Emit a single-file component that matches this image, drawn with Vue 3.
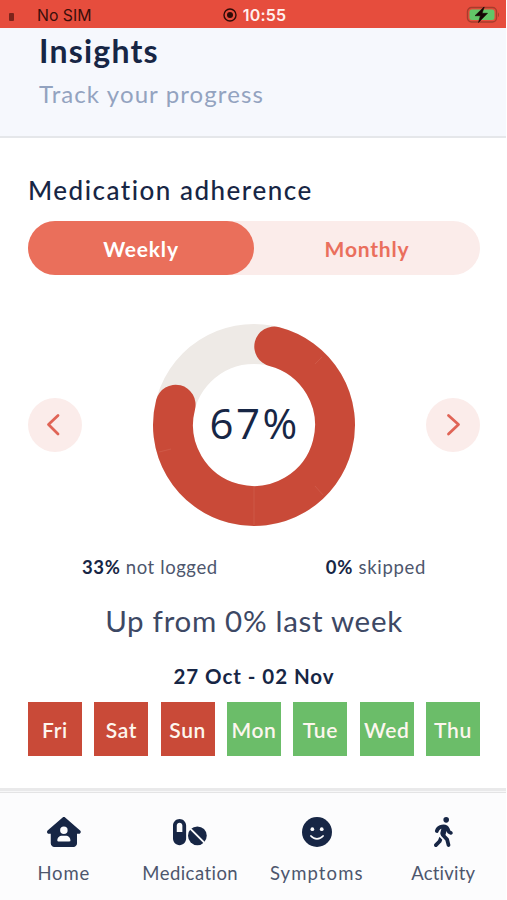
<template>
  <div class="screen">
    <div class="statusBar">
      <div class="carrier">
        <span class="signal"></span>
        <span class="sim">No SIM</span>
      </div>
      <div class="clock">
        <svg width="14" height="14" viewBox="0 0 14 14">
          <circle cx="7" cy="7" r="6" fill="none" stroke="#2e0b08" stroke-width="1.4" />
          <circle cx="7" cy="7" r="3" fill="#2e0b08" />
        </svg>
        <span class="time">10:55</span>
      </div>
      <svg class="battery" width="34" height="18" viewBox="0 0 34 18">
        <rect x="1.500" y="1.500" width="29" height="14.500" rx="4" fill="none" stroke="#a83c2c" stroke-width="1.400" />
        <rect x="3.500" y="3.500" width="25" height="10.500" rx="2.500" fill="#62c668" />
        <path d="M32 6.500v4.500c1.300-.4 1.300-4.100 0-4.500z" fill="#a83c2c" />
        <path d="M18 1 9 9.700h5.400L12.500 16.500l9-9.200h-5.400L18.200 1z" fill="#160605" stroke="#160605" stroke-width=".6" />
      </svg>
    </div>

    <header class="header">
      <h1>Insights</h1>
      <p>Track your progress</p>
    </header>

    <main class="content">
      <h2>Medication adherence</h2>

      <div class="toggle">
        <button
          v-for="option in periods"
          :key="option"
          :class="['toggleButton', { active: option === period }]"
          @click="period = option"
        >{{ option }}</button>
      </div>

      <div class="chartRow">
        <button class="arrow">
          <svg width="54" height="54" viewBox="0 0 54 54">
            <path d="M30 17.500 20.500 26.500l9.500 9.500" />
          </svg>
        </button>
        <div class="donut">
          <svg width="204" height="204" viewBox="-1 -1 204 204">
            <circle cx="101" cy="101" r="81" fill="none" stroke="#eeeae6" stroke-width="40" />
            <path :d="arcPath" fill="none" stroke="#c94a38" stroke-width="40" stroke-linecap="round" />
            <path d="M101 162v39M162 40l7-7M162 162l8 9M6 128l12-3" stroke="#d26352" stroke-width=".6" />
          </svg>
          <span class="percent">67%</span>
        </div>
        <button class="arrow">
          <svg width="54" height="54" viewBox="0 0 54 54">
            <path d="M22.500 17.500l10 9-10 9.500" />
          </svg>
        </button>
      </div>

      <div class="stats">
        <span class="notLogged"><b>33%</b> not logged</span>
        <span class="skipped"><b>0%</b> skipped</span>
      </div>
      <p class="trend">Up from 0% last week</p>
      <p class="range">27 Oct - 02 Nov</p>

      <div class="days">
        <div v-for="day in days" :key="day.name" :class="['day', { taken: day.taken }]">{{ day.name }}</div>
      </div>
    </main>

    <nav class="tabs">
      <a class="tab home">
        <svg width="33.750" height="30" viewBox="0 0 576 512">
          <path d="M575.800 255.500c0 18-15 32.100-32 32.100h-32l.7 160.200c.2 35.500-28.500 64.300-64 64.300H128.100c-35.300 0-64-28.700-64-64V287.600H32c-18 0-32-14-32-32.100c0-9 3-17 10-24L266.400 8c7-7 15-8 22-8s15 2 21 7L564.800 231.500c8 7 12 15 11 24zM352 224a64 64 0 1 0-128 0 64 64 0 1 0 128 0zm-96 96c-44.200 0-80 35.800-80 80c0 8.800 7.200 16 16 16H384c8.800 0 16-7.200 16-16c0-44.200-35.800-80-80-80H256z" />
        </svg>
        <span>Home</span>
      </a>
      <a class="tab medication">
        <svg width="33.750" height="30" viewBox="0 0 576 512">
          <path fill-rule="evenodd" d="M112 32C50.100 32 0 82.100 0 144V368c0 61.900 50.100 112 112 112s112-50.100 112-112V144c0-61.900-50.100-112-112-112zm0 64c26.500 0 48 21.500 48 48v112H64V144c0-26.500 21.500-48 48-48z" />
          <circle cx="416" cy="320" r="160" />
          <path d="M290 194 542 446" stroke="#fcfcfd" stroke-width="34" />
        </svg>
        <span>Medication</span>
      </a>
      <a class="tab symptoms">
        <svg width="30" height="30" viewBox="0 0 512 512">
          <circle cx="256" cy="256" r="256" />
          <circle cx="176.400" cy="208" r="32" fill="#fcfcfd" />
          <circle cx="336.400" cy="208" r="32" fill="#fcfcfd" />
          <path d="M153 325c20 24 55 47 103 47s83-23 103-47" fill="none" stroke="#fcfcfd" stroke-width="30" stroke-linecap="round" />
        </svg>
        <span>Symptoms</span>
      </a>
      <a class="tab activity">
        <svg width="18.750" height="30" viewBox="0 0 320 512">
          <path d="M160 48a48 48 0 1 1 96 0 48 48 0 1 1 -96 0zM126.500 199.300c-1 .4-1.900 .8-2.900 1.200l-8 3.500c-16.400 7.300-29 21.200-34.700 38.200l-2.600 7.800c-5.600 16.800-23.700 25.800-40.500 20.200s-25.800-23.700-20.200-40.500l2.600-7.800c11.400-34.100 36.600-61.900 69.400-76.500l8-3.500c20.800-9.200 43.300-14 66.100-14c44.600 0 84.800 26.800 101.900 67.900L281 232.700l21.400 10.700c15.800 7.900 22.200 27.100 14.300 42.900s-27.100 22.200-42.900 14.300L247 287.300c-10.300-5.200-18.400-13.800-22.800-24.500l-9.600-23-19.300 65.500 49.500 54c5.400 5.900 9.200 13 11.200 20.800l23 92.100c4.300 17.100-6.100 34.500-23.300 38.800s-34.500-6.100-38.800-23.300l-22-88.100-70.700-77.100c-14.800-16.100-20.300-38.600-14.700-59.700l16.900-63.500zM68.700 398l25-62.400c2.100 3 4.500 5.800 7 8.600l40.700 44.400-14.500 36.200c-2.400 6-6 11.500-10.600 16.100L54.600 502.600c-12.500 12.500-32.800 12.500-45.300 0s-12.500-32.800 0-45.300L68.700 398z" />
        </svg>
        <span>Activity</span>
      </a>
    </nav>
  </div>
</template>

<script setup>
import { ref, computed } from 'vue';

const periods = ['Weekly', 'Monthly'];
const period = ref('Weekly');

const days = [
  { name: 'Fri', taken: false },
  { name: 'Sat', taken: false },
  { name: 'Sun', taken: false },
  { name: 'Mon', taken: true },
  { name: 'Tue', taken: true },
  { name: 'Wed', taken: true },
  { name: 'Thu', taken: true },
];

// angles are in degrees, clockwise from the top
const point = (angle) => {
  const rad = (angle * Math.PI) / 180;
  return `${101 + 81 * Math.sin(rad)} ${101 - 81 * Math.cos(rad)}`;
};

const arcPath = computed(() => `M${point(14.5)}A81 81 0 1 1 ${point(284.5)}`);
</script>

<style>
body {
  background: #fff;
}
</style>

<style scoped>
.screen {
  display: flex;
  flex-direction: column;
  width: 506px;
  height: 900px;
  overflow: hidden;
  box-sizing: border-box;
  font-family: Lato, "Open Sans", sans-serif;
  font-variant-ligatures: none;
  color: #172645;
  background: #fff;
}

h1, h2, p {
  margin: 0;
  white-space: nowrap;
}

button {
  border: none;
  padding: 0;
  font-family: inherit;
  cursor: pointer;
}

.statusBar {
  display: grid;
  grid-template-columns: 1fr auto 1fr;
  align-items: center;
  height: 28px;
  flex: none;
  padding: 2px 6px 0 9px;
  box-sizing: border-box;
  background: #e64d3d;
  font-family: Inter, sans-serif;
}

.carrier {
  display: flex;
  align-items: center;
  gap: 23px;
  font-size: 15.800px;
  color: #3a0e0a;
}

.signal {
  width: 5px;
  height: 8px;
  margin-top: 3px;
  border-radius: 1px;
  background: #7c241b;
}

.clock {
  display: flex;
  align-items: center;
  gap: 6px;
}

.time {
  color: #fff0ee;
  font-size: 16px;
  font-weight: 600;
  letter-spacing: 0.2px;
}

.battery {
  justify-self: end;
}

.header {
  flex: none;
  height: 110px;
  box-sizing: border-box;
  padding: 2px 39px 0;
  background: #f6f8fd;
  border-bottom: 2px solid #e5e7ea;
}

.header h1 {
  font-size: 32px;
  line-height: 42px;
  font-weight: 700;
  letter-spacing: 1.200px;
}

.header p {
  margin-top: 5px;
  font-size: 24px;
  line-height: 34px;
  letter-spacing: 1.100px;
  color: #93a3c0;
}

.content {
  display: flex;
  flex-direction: column;
  flex: none;
  height: 650px;
  box-sizing: border-box;
  padding: 35px 26px 0 28px;
}

.content h2 {
  font-size: 26px;
  line-height: 34px;
  font-weight: 500;
  letter-spacing: 1.500px;
}

.toggle {
  display: flex;
  height: 54px;
  margin-top: 14px;
  border-radius: 27px;
  background: #fbecea;
}

.toggleButton {
  flex: 1;
  border-radius: 27px;
  background: transparent;
  color: #ea6f5d;
  font-size: 21px;
  font-weight: 700;
  letter-spacing: 0.800px;
}

.toggleButton.active {
  background: #ea6f5b;
  color: #fff;
}

.chartRow {
  display: flex;
  align-items: center;
  justify-content: space-between;
  height: 204px;
  margin-top: 47.500px;
}

.arrow {
  width: 54px;
  height: 54px;
  border-radius: 50%;
  background: #fbecea;
}

.arrow svg {
  display: block;
}

.arrow path {
  fill: none;
  stroke: #e06456;
  stroke-width: 2.8;
  stroke-linecap: round;
  stroke-linejoin: round;
}

.donut {
  display: grid;
  place-items: center;
}

.donut > * {
  grid-area: 1 / 1;
}

.percent {
  padding-bottom: 4px;
  font-family: "Open Sans", sans-serif;
  font-size: 42px;
  font-weight: 500;
  letter-spacing: 2.500px;
  text-indent: 1px;
}

.stats {
  display: flex;
  gap: 108px;
  margin-top: 26px;
  padding-left: 54px;
  font-size: 18.500px;
  line-height: 28px;
  letter-spacing: 0.600px;
  color: #4d566d;
}

.stats b {
  color: #172645;
}

.stats .skipped {
  letter-spacing: 0.700px;
}

.trend,
.range {
  text-align: center;
}

.trend {
  margin-top: 20px;
  font-size: 29.500px;
  line-height: 40px;
  letter-spacing: 0.700px;
  color: #3d4864;
}

.range {
  margin-top: 20px;
  font-size: 20.500px;
  line-height: 30px;
  font-weight: 700;
  letter-spacing: 0.950px;
}

.days {
  display: flex;
  justify-content: space-between;
  margin-top: 11px;
}

.day {
  display: flex;
  align-items: center;
  justify-content: center;
  width: 54px;
  height: 54px;
  padding-top: 1px;
  box-sizing: border-box;
  background: #c94a38;
  color: #fdf6ee;
  font-size: 21px;
  font-weight: 600;
  letter-spacing: 0.600px;
}

.day.taken {
  background: #6bbd69;
}

.tabs {
  display: grid;
  grid-template-columns: repeat(4, 1fr);
  flex: 1;
  border-top: 3px solid #e9e9ea;
  box-shadow: inset 0 1px #f7f7f8, inset 0 2px #e4e4e5;
  background: #fcfcfd;
}

.tab {
  display: flex;
  flex-direction: column;
  align-items: center;
  padding: 26px 0 0 1px;
  font-size: 18.500px;
  color: #4d566d;
}

.tab svg {
  fill: #172645;
}

.tab span {
  margin-top: 12px;
  line-height: 28px;
  letter-spacing: 0.450px;
}

.tab.home span {
  letter-spacing: 0.800px;
}

.tab.symptoms span {
  letter-spacing: 1.100px;
}

.tab.activity span {
  letter-spacing: 0.200px;
}
</style>
